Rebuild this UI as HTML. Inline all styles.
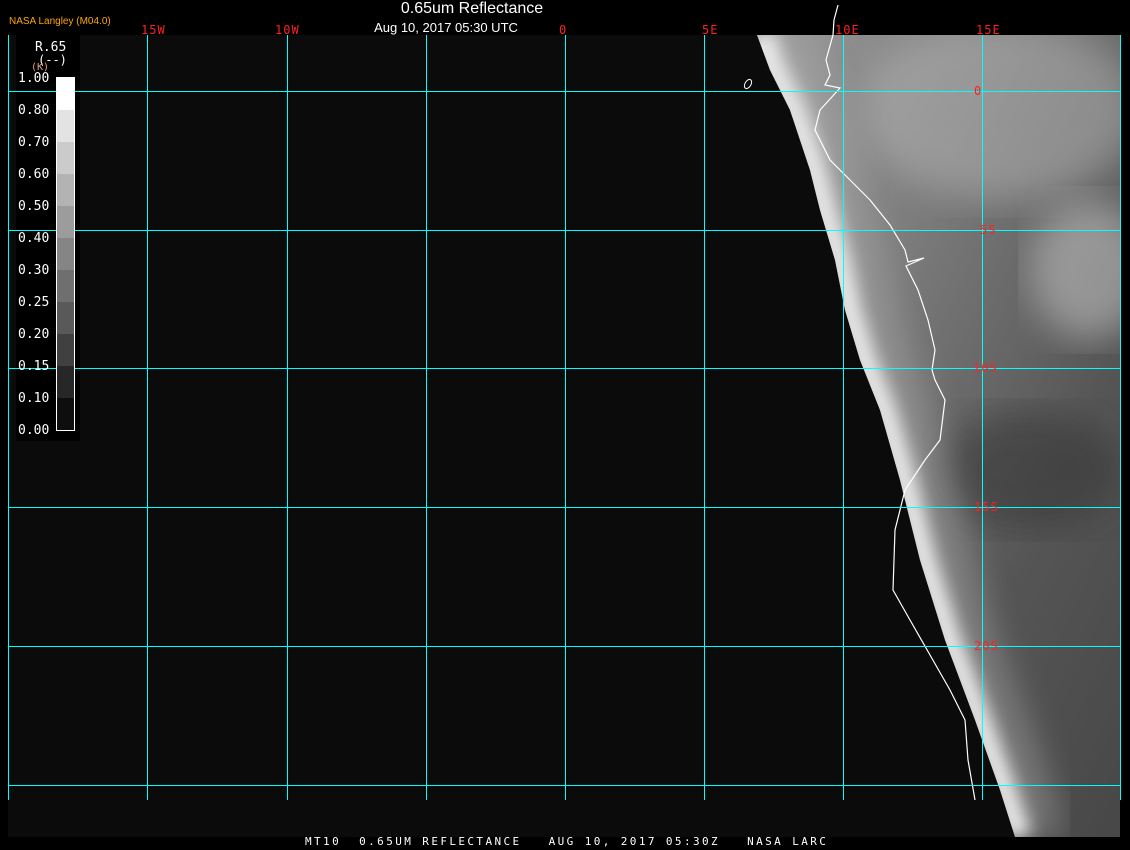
<!DOCTYPE html>
<html><head><meta charset="utf-8"><style>
html,body{margin:0;padding:0;background:#000;width:1130px;height:850px;overflow:hidden}
body{position:relative;font-family:"DejaVu Sans Mono","Liberation Mono",monospace}
.t{position:absolute;color:#fff;white-space:pre}
</style></head><body>
<svg width="1130" height="850" style="position:absolute;left:0;top:0">
<defs>
<linearGradient id="g1" x1="0" y1="0" x2="1" y2="1">
<stop offset="0" stop-color="#9a9a9a"/><stop offset="0.35" stop-color="#7a7a7a"/><stop offset="0.7" stop-color="#555"/><stop offset="1" stop-color="#474747"/>
</linearGradient>
<filter id="b"><feGaussianBlur stdDeviation="8"/></filter>
<filter id="b2"><feGaussianBlur stdDeviation="18"/></filter>
<clipPath id="c"><polygon points="757,35 770,70 790,110 810,170 820,210 835,260 845,310 860,360 880,410 900,480 920,560 945,640 975,720 1000,790 1015,837 1120,837 1120,35"/></clipPath>
</defs>
<rect x="8" y="35" width="1112" height="802" fill="#0b0b0b"/>
<rect x="16" y="35" width="64" height="406" fill="#000"/>
<polygon points="757,35 770,70 790,110 810,170 820,210 835,260 845,310 860,360 880,410 900,480 920,560 945,640 975,720 1000,790 1015,837 1120,837 1120,35" fill="url(#g1)"/>
<g clip-path="url(#c)">
<ellipse cx="1000" cy="110" rx="140" ry="90" fill="#bbb" opacity="0.45" filter="url(#b2)"/>
<ellipse cx="1090" cy="270" rx="60" ry="70" fill="#ccc" opacity="0.5" filter="url(#b2)"/>
<ellipse cx="1030" cy="470" rx="90" ry="60" fill="#333" opacity="0.5" filter="url(#b2)"/>
<polyline points="762,35 775,70 795,110 815,170 825,210 840,260 850,310 865,360 885,410 905,480 925,560 950,640 980,720 1005,790 1020,837" fill="none" stroke="#f2f2f2" stroke-width="26" filter="url(#b)"/>
<polyline points="790,35 800,70 820,110 840,170 850,210 865,260 875,310 890,360 910,410 930,480 950,560 975,640 1005,720 1030,790 1045,837" fill="none" stroke="#b0b0b0" stroke-width="30" opacity="0.6" filter="url(#b2)"/>
</g>
<polyline points="838,5 834,20 833,35 826,60 830,75 825,85 840,88 820,110 815,130 830,160 845,175 870,200 890,225 905,250 908,262 924,258 906,266 918,290 928,320 935,350 932,370 935,380 945,400 940,440 925,460 905,490 895,530 893,590 910,620 930,655 950,690 965,720 968,760 975,800" fill="none" stroke="#fff" stroke-width="1.2"/>
<ellipse cx="748" cy="84" rx="3" ry="5" fill="none" stroke="#fff" stroke-width="1" transform="rotate(30 748 84)"/>
<g stroke="#00ffff" stroke-width="1" shape-rendering="crispEdges">
<line x1="8.5" y1="35" x2="8.5" y2="800"/><line x1="147.5" y1="35" x2="147.5" y2="800"/><line x1="287.5" y1="35" x2="287.5" y2="800"/><line x1="426.5" y1="35" x2="426.5" y2="800"/><line x1="565.5" y1="35" x2="565.5" y2="800"/><line x1="704.5" y1="35" x2="704.5" y2="800"/><line x1="843.5" y1="35" x2="843.5" y2="800"/><line x1="982.5" y1="35" x2="982.5" y2="800"/><line x1="1120.5" y1="35" x2="1120.5" y2="800"/>
<line x1="8" y1="91.5" x2="1120" y2="91.5"/><line x1="8" y1="230.5" x2="1120" y2="230.5"/><line x1="8" y1="368.5" x2="1120" y2="368.5"/><line x1="8" y1="507.5" x2="1120" y2="507.5"/><line x1="8" y1="646.5" x2="1120" y2="646.5"/><line x1="8" y1="785.5" x2="1120" y2="785.5"/>
</g>
<g shape-rendering="crispEdges">
<rect x="56" y="77" width="19" height="33" fill="#fff"/>
<rect x="56" y="110" width="19" height="32" fill="#e3e3e3"/>
<rect x="56" y="142" width="19" height="32" fill="#cbcbcb"/>
<rect x="56" y="174" width="19" height="32" fill="#b3b3b3"/>
<rect x="56" y="206" width="19" height="32" fill="#9c9c9c"/>
<rect x="56" y="238" width="19" height="32" fill="#858585"/>
<rect x="56" y="270" width="19" height="32" fill="#6f6f6f"/>
<rect x="56" y="302" width="19" height="32" fill="#595959"/>
<rect x="56" y="334" width="19" height="32" fill="#404040"/>
<rect x="56" y="366" width="19" height="32" fill="#272727"/>
<rect x="56" y="398" width="19" height="32" fill="#0e0e0e"/>
<rect x="56.5" y="77.5" width="18" height="353" fill="none" stroke="#fff"/>
</g>
<g fill="#ff2020" font-family="DejaVu Sans Mono,monospace" font-size="12" letter-spacing="1">
<text x="141" y="34">15W</text><text x="275" y="34">10W</text><text x="559" y="34">0</text><text x="702" y="34">5E</text><text x="835" y="34">10E</text><text x="976" y="34">15E</text>
<text x="974" y="95">0</text><text x="980" y="234">5S</text><text x="973" y="372">10S</text><text x="974" y="511">15S</text><text x="974" y="650">20S</text>
</g>
</svg>
<div class="t" style="left:9px;top:16px;color:#ffa500;font-family:'Liberation Sans',sans-serif;font-size:10px">NASA Langley (M04.0)</div>
<div class="t" style="left:372px;top:0px;width:200px;text-align:center;font-family:'Liberation Sans',sans-serif;font-size:16px">0.65um Reflectance</div>
<div class="t" style="left:346px;top:20px;width:200px;text-align:center;font-family:'Liberation Sans',sans-serif;font-size:13px">Aug 10, 2017 05:30 UTC</div>
<div class="t" style="left:35px;top:40px;font-size:13px">R.65</div>
<div class="t" style="left:38px;top:53px;font-size:12px">(--)</div>
<div class="t" style="left:31px;top:62px;font-size:10px;color:#e0a080">(K)</div>
<div style="position:absolute;left:18px;top:63px;font-size:13px;color:#fff;line-height:32px;font-family:'DejaVu Sans Mono',monospace">1.00<br>0.80<br>0.70<br>0.60<br>0.50<br>0.40<br>0.30<br>0.25<br>0.20<br>0.15<br>0.10<br>0.00</div>
<div class="t" style="left:305px;top:835px;font-size:11px;letter-spacing:2.4px">MT10  0.65UM REFLECTANCE   AUG 10, 2017 05:30Z   NASA LARC</div>
</body></html>
